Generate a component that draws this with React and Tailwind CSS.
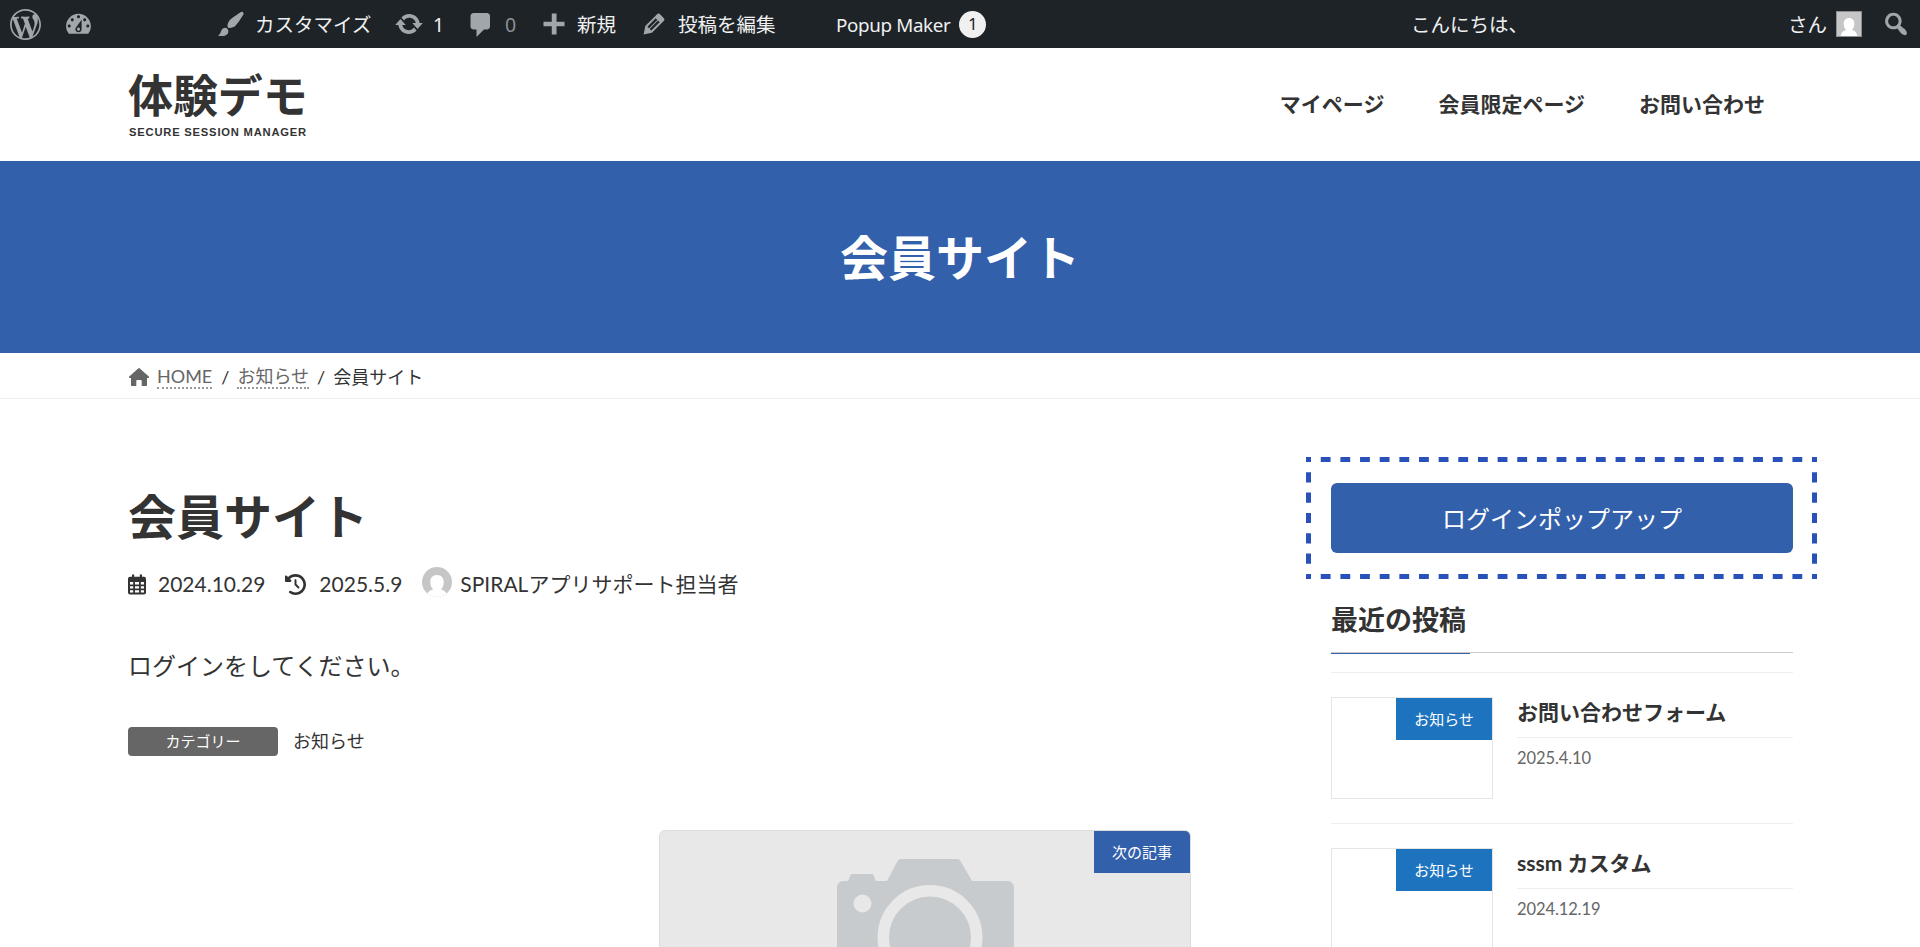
import React from 'react';
import { FaClockRotateLeft } from 'react-icons/fa6';

const dashicons = {
  wordpress: 'M20 10c0-5.51-4.49-10-10-10C4.48 0 0 4.49 0 10c0 5.52 4.48 10 10 10 5.51 0 10-4.48 10-10zM7.78 15.37L4.37 6.22c.55-.02 1.17-.08 1.17-.08.5-.06.44-1.13-.06-1.11 0 0-1.45.11-2.37.11-.18 0-.37 0-.58-.01C4.12 2.69 6.87 1.11 10 1.11c2.33 0 4.45.87 6.05 2.34-.68-.11-1.65.39-1.65 1.58 0 .74.45 1.36.9 2.1.35.61.55 1.36.55 2.46 0 1.49-1.4 5-1.4 5l-3.03-8.37c.54-.02.82-.17.82-.17.5-.05.44-1.25-.06-1.22 0 0-1.44.12-2.38.12-.87 0-2.33-.12-2.33-.12-.5-.03-.56 1.2-.06 1.22l.92.08 1.26 3.41zM17.41 10c.24-.64.74-1.87.43-4.25.7 1.29 1.05 2.71 1.05 4.25 0 3.29-1.73 6.24-4.4 7.78.97-2.59 1.94-5.2 2.92-7.78zM6.1 18.09C3.12 16.65 1.11 13.53 1.11 10c0-1.3.23-2.48.72-3.59C3.25 10.3 4.67 14.2 6.1 18.09zm4.03-6.63l2.58 6.98c-.86.29-1.76.45-2.71.45-.79 0-1.57-.11-2.29-.33.81-2.38 1.62-4.74 2.42-7.1z',
  dashboard: 'M3.76 16h12.48c1.1-1.37 1.76-3.11 1.76-5 0-4.42-3.58-8-8-8s-8 3.58-8 8c0 1.89.66 3.63 1.76 5zM10 4c.55 0 1 .45 1 1s-.45 1-1 1-1-.45-1-1 .45-1 1-1zM6 6c.55 0 1 .45 1 1s-.45 1-1 1-1-.45-1-1 .45-1 1-1zm8 0c.55 0 1 .45 1 1s-.45 1-1 1-1-.45-1-1 .45-1 1-1zm-5.37 5.55L12 7v6c0 1.1-.9 2-2 2s-2-.9-2-2c0-.57.24-1.08.63-1.45zM4 10c.55 0 1 .45 1 1s-.45 1-1 1-1-.45-1-1 .45-1 1-1zm12 0c.55 0 1 .45 1 1s-.45 1-1 1-1-.45-1-1 .45-1 1-1zm-5 3c0-.55-.45-1-1-1s-1 .45-1 1 .45 1 1 1 1-.45 1-1z',
  customizer: 'M18.33 3.57s.27-.8-.31-1.36c-.53-.52-1.22-.24-1.22-.24-.61.3-5.76 3.47-7.67 5.57-.86.96-2.06 3.79-1.09 4.82.92.98 3.96-.17 4.79-1 2.06-2.06 5.21-7.17 5.5-7.79zM1.4 17.65c2.37-1.56 1.46-3.41 3.23-4.64.93-.65 2.22-.62 3.08.29.63.67.8 2.57-.16 3.46-1.57 1.45-4 1.55-6.15.89z',
  update: 'M10.2 3.28c3.53 0 6.43 2.61 6.92 6h2.08l-3.5 4-3.5-4h2.32c-.45-1.97-2.21-3.45-4.32-3.45-1.45 0-2.73.71-3.54 1.78L4.95 5.66C6.23 4.2 8.11 3.28 10.2 3.28zm-.4 13.44c-3.52 0-6.43-2.61-6.92-6H.8l3.5-4c1.17 1.33 2.33 2.67 3.5 4H5.48c.45 1.97 2.21 3.45 4.32 3.45 1.45 0 2.73-.71 3.54-1.78l1.71 1.95c-1.28 1.46-3.15 2.38-5.25 2.38z',
  comments: 'M5 2h9c1.1 0 2 .9 2 2v7c0 1.1-.9 2-2 2h-2l-5 5v-5H5c-1.1 0-2-.9-2-2V4c0-1.1.9-2 2-2z',
  plus: 'M17 8.5v3h-5.3V17H8.5v-5.5H3v-3h5.5V3h3.2v5.5H17z',
  edit: 'M13.89 3.39l2.71 2.72c.46.46.42 1.24.03 1.64l-8.01 8.02-5.56 1.16 1.16-5.58s7.6-7.63 7.99-8.03c.39-.39 1.22-.39 1.68.07zm-2.73 2.79l-5.59 5.61 1.11 1.11 5.54-5.65zm-2.97 8.23l5.58-5.6-1.07-1.08-5.59 5.6z',
  search: 'M12.14 4.18c1.87 1.87 2.11 4.75.72 6.89.12.1.22.21.36.31.2.16.47.36.81.59.34.24.56.39.66.47.42.31.73.57.94.78.32.32.6.65.84 1 .25.35.44.69.59 1.04.14.35.21.68.18 1-.02.32-.14.59-.36.81s-.49.34-.81.36c-.31.02-.65-.04-.99-.19-.35-.14-.7-.34-1.04-.59-.35-.24-.68-.52-1-.84-.21-.21-.47-.52-.77-.93-.1-.13-.25-.35-.47-.66-.22-.32-.4-.57-.56-.78-.16-.2-.29-.35-.44-.5-2.07 1.09-4.69.76-6.44-.98-2.14-2.15-2.14-5.64 0-7.78 2.15-2.15 5.63-2.15 7.78 0zm-1.41 6.36c1.36-1.37 1.36-3.58 0-4.95-1.37-1.37-3.59-1.37-4.95 0-1.37 1.37-1.37 3.58 0 4.95 1.36 1.37 3.58 1.37 4.95 0z',
};

const Dashicon = ({ name, className = 'size-[30px]' }) => (
  <svg viewBox="0 0 20 20" fill="currentColor" className={`shrink-0 text-[#a1a6ab] ${className}`}>
    <path d={dashicons[name]} />
  </svg>
);

const HomeIcon = () => (
  <svg viewBox="0 0 20 18" className="mr-[8px] ml-px h-[18px] w-[20px] shrink-0" fill="#666">
    <path d="M9.200.4a1.200 1.200 0 0 1 1.600 0l9 8c.6.600.2 1.600-.7 1.600H18v7c0 .6-.4 1-1 1h-4.300v-5c0-.5-.4-.9-.9-.9H8.200c-.5 0-.9.4-.9.9v5H3c-.6 0-1-.4-1-1v-7H.9c-.9 0-1.300-1-.7-1.600z" />
  </svg>
);

const CalendarIcon = () => (
  <svg viewBox="0 0 18 21" className="h-[21px] w-[18px] shrink-0" fill="#333">
    <path fillRule="evenodd" d="M4 .5h2.2v2.2h5.6V.5H14v2.2h2A2 2 0 0 1 18 4.700V18.500a2 2 0 0 1-2 2H2a2 2 0 0 1-2-2V4.700a2 2 0 0 1 2-2h2zM2 8v2.500h3.200V8zm5 0v2.500h4V8zm5.800 0v2.500H16V8zM2 12.200v2.300h3.200v-2.300zm5 0v2.300h4v-2.300zm5.800 0v2.300H16v-2.300zM2 16.300v2.200h3.200v-2.200zm5 0v2.200h4v-2.200zm5.800 0v2.200H16v-2.200z" />
  </svg>
);

const CameraPlaceholder = () => (
  <svg viewBox="0 0 178 150" className="mt-[28px] ml-[177px] h-[150px] w-[178px]">
    <path fill="#c8cbce" d="M6 22h3c3 0 3-2 4-5 .5-1.500 1.500-2 3-2h18c1.500 0 2.500.5 3 2 1 3 1 5 3 5h10L60 3c1-2 2-3 4-3h56c2 0 3 1 4 3l11 19h36c3 0 6 3 6 6v122H0V28c0-3 3-6 6-6z" />
    <circle cx="25.500" cy="44.500" r="9" fill="#e8e8e8" />
    <circle cx="93" cy="78.500" r="46.700" fill="none" stroke="#e8e8e8" strokeWidth="11.500" />
  </svg>
);

// Dashed outline, every corner is half a dash on both sides
const DashedFrame = () => (
  <svg viewBox="0 0 511 122" className="pointer-events-none absolute inset-0 h-[122px] w-[511px]" stroke="#2851b9" strokeWidth="5">
    <path d="M0 2.500H511M0 119.500H511" strokeDasharray="9.827" strokeDashoffset="4.913" />
    <path d="M2.500 0V122M508.500 0V122" strokeDasharray="10.167" strokeDashoffset="5.083" />
  </svg>
);

const posts = [
  { title: 'お問い合わせフォーム', date: '2025.4.10', category: 'お知らせ' },
  { title: 'sssm カスタム', date: '2024.12.19', category: 'お知らせ' },
];

const AdminBar = () => (
  <div className="flex h-12 items-center bg-[#1d2327] font-['Noto_Sans','Noto_Sans_CJK_JP',sans-serif] text-[19.500px] leading-[46px] whitespace-nowrap text-[#f0f0f1]">
    <Dashicon name="wordpress" className="ml-[10px] size-[31px]" />
    <Dashicon name="dashboard" className="ml-[22px] size-[31px]" />
    <div className="ml-[122px] flex w-[178px] items-center">
      <Dashicon name="customizer" />
      <span className="ml-[9px] pt-[2px]">カスタマイズ</span>
    </div>
    <div className="flex w-[72px] items-center">
      <Dashicon name="update" />
      <span className="ml-[9px] pt-[2px]">1</span>
    </div>
    <div className="flex w-[73px] items-center">
      <Dashicon name="comments" className="mt-[2px] size-[30px]" />
      <span className="ml-[9px] pt-[2px] text-[#8d9196]">0</span>
    </div>
    <div className="flex w-[100px] items-center">
      <Dashicon name="plus" />
      <span className="ml-[8px] pt-[2px]">新規</span>
    </div>
    <div className="flex w-[197px] items-center">
      <Dashicon name="edit" />
      <span className="ml-[9px] pt-[2px]">投稿を編集</span>
    </div>
    <span className="pt-[2px] text-[18.800px] tracking-[-0.35px]">Popup Maker</span>
    <span className="ml-[9px] flex size-[27px] items-center justify-center rounded-full bg-[#f0f0f1] text-[17px] text-[#1d2327]">1</span>
    <div className="ml-auto flex items-center">
      <span className="w-[377px] pt-[2px]">こんにちは、</span>
      <span className="pt-[2px]">さん</span>
      <svg viewBox="0 0 26 26" className="ml-[9px] size-[26px]">
        <rect width="26" height="26" fill="#8c8f94" />
        <rect x="1" y="1" width="24" height="24" fill="#c6c6c6" />
        <path fill="#fff" d="M13 7c3.500 0 5.300 2.500 5.300 6 0 2.600-1 4.600-2.300 6 3 .6 4.800 2.500 5.300 6H4.700c.5-3.500 2.300-5.400 5.300-6-1.300-1.400-2.300-3.400-2.300-6 0-3.500 1.800-6 5.300-6z" />
      </svg>
      <Dashicon name="search" className="mr-[9px] ml-[19px] size-[30px]" />
    </div>
  </div>
);

const Header = () => (
  <header className="flex h-[113px] items-center justify-between bg-white pr-[155px] pl-[128px]">
    <div className="flex flex-col text-[#333]">
      <span className="-mt-[3px] text-[45px] leading-[58px] font-bold tracking-[-0.1px]">体験デモ</span>
      <span className="ml-px font-['Liberation_Sans',Arial,sans-serif] text-[11.200px] leading-[15px] font-bold tracking-[0.8px]">SECURE SESSION MANAGER</span>
    </div>
    <nav className="-mt-px flex gap-[54px] text-[21px] font-bold text-[#333]">
      <a>マイページ</a>
      <a>会員限定ページ</a>
      <a>お問い合わせ</a>
    </nav>
  </header>
);

const Breadcrumb = () => (
  <div className="flex h-[46px] items-center border-b border-[#eee] pt-[2px] pl-[128px] text-[18px] leading-[22px] text-[#333]">
    <HomeIcon />
    <a className="border-b-2 border-dotted border-[#999] text-[#666]">HOME</a>
    <span className="mr-[8px] ml-[9px]">/</span>
    <a className="border-b-2 border-dotted border-[#999] text-[#666]">お知らせ</a>
    <span className="mr-[8px] ml-[8px]">/</span>
    <span>会員サイト</span>
  </div>
);

const Article = () => (
  <main className="w-[1063px]">
    <h1 className="mt-[82px] text-[48px] leading-[72px] font-bold">会員サイト</h1>
    <div className="mt-[13px] flex h-[36px] items-center text-[21px]">
      <CalendarIcon />
      <span className="ml-[12px]">2024.10.29</span>
      <FaClockRotateLeft className="ml-[20px] size-[21px]" />
      <span className="ml-[13px]">2025.5.9</span>
      <svg viewBox="0 0 30 30" className="mb-[5px] ml-[20px] size-[30px]">
        <clipPath id="author"><circle cx="15" cy="15" r="15" /></clipPath>
        <g clipPath="url(#author)">
          <rect width="30" height="30" fill="#c6c6c6" />
          <path fill="#fff" d="M15 8c4.500 0 6.700 3 6.700 7.200 0 3-1.200 5.700-3 7.300 3.800.8 6.500 3 7.300 8H4c.8-5 3.500-7.200 7.300-8-1.800-1.600-3-4.300-3-7.300C8.300 11 10.500 8 15 8z" />
        </g>
      </svg>
      <span className="ml-[8px]">SPIRALアプリサポート担当者</span>
    </div>
    <p className="mt-[44px] text-[24px] leading-[40px]">ログインをしてください。</p>
    <div className="mt-[40px] flex h-[30px] items-center">
      <span className="flex h-[29px] w-[150px] items-center justify-center rounded-[4px] bg-[#666] text-[15px] text-white">カテゴリー</span>
      <a className="ml-[15px] text-[18px]">お知らせ</a>
    </div>
    <div className="relative mt-[74px] ml-auto h-[320px] w-[532px] overflow-hidden rounded-[6px] border border-[#dcdcdc] bg-[#e8e8e8]">
      <CameraPlaceholder />
      <span className="absolute top-0 right-0 flex h-[42px] w-[96px] items-center justify-center bg-[#3360ab] text-[15px] text-white">次の記事</span>
    </div>
  </main>
);

const PostItem = ({ post }) => (
  <li className="flex h-[151px] border-t border-[#eee] pt-6">
    <div className="relative h-[102px] w-[162px] border border-[#e5e5e5]">
      <span className="absolute top-0 right-0 flex h-[42px] w-[96px] items-center justify-center bg-[#1e73be] pt-px text-[15px] text-white">{post.category}</span>
    </div>
    <div className="ml-6 flex-1">
      <h3 className="h-[41px] border-b border-[#eee] text-[21px] leading-[29px] font-bold">{post.title}</h3>
      <div className="mt-[5px] text-[16.500px] leading-[30px] tracking-[-0.1px] text-[#666]">{post.date}</div>
    </div>
  </li>
);

const Sidebar = () => (
  <aside className="ml-[115px] w-[511px] pt-[58px]">
    <div className="relative h-[122px] pt-[26px] pr-[24px] pl-[25px]">
      <DashedFrame />
      <button className="h-[70px] w-full rounded-[6px] bg-[#3360ab] pt-px text-[24px] text-white">ログインポップアップ</button>
    </div>
    <div className="pr-[24px] pl-[25px]">
      <h2 className="mt-[21px] flex h-[53px] items-start border-b border-[#ccc] text-[27px] leading-[40px] font-bold">最近の投稿</h2>
      <div className="h-px w-[139px] bg-[#3360ab]" />
      <ul className="mt-[18px]">
        {posts.map((post) => <PostItem key={post.title} post={post} />)}
      </ul>
    </div>
  </aside>
);

export default function App() {
  return (
    <div className="h-[947px] overflow-hidden bg-white font-[Lato,'Noto_Sans_CJK_JP',sans-serif] text-[#333]">
      <AdminBar />
      <Header />
      <div className="flex h-[192px] items-center justify-center bg-[#3360ab] pt-px text-[48px] font-bold text-white">会員サイト</div>
      <Breadcrumb />
      <div className="flex pl-[128px]">
        <Article />
        <Sidebar />
      </div>
    </div>
  );
}
